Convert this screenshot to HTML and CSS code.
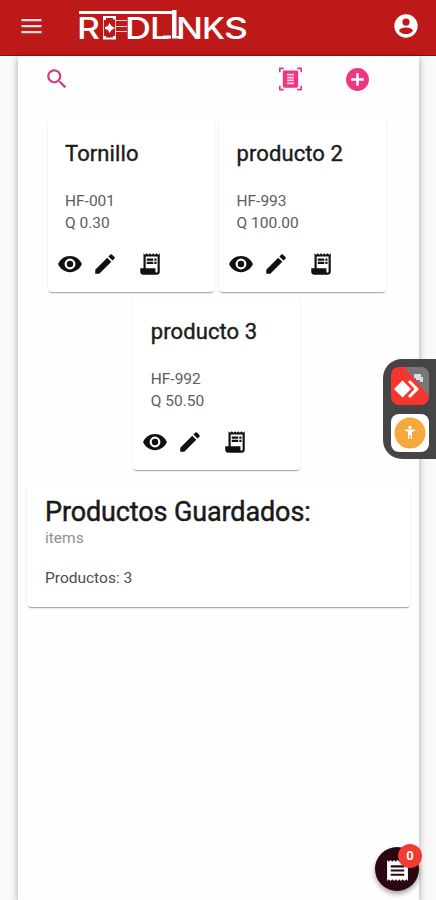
FILE: index.html
```
<!DOCTYPE html>
<html lang="es">
<head>
<meta charset="utf-8">
<title>Redlinks</title>
<link rel="stylesheet" href="styles.css">
</head>
<body>
<svg width="0" height="0" class="defs">
  <symbol id="eye" viewBox="0 0 24 24"><path d="M12 4.5C7 4.500 2.730 7.610 1 12c1.730 4.390 6 7.500 11 7.500s9.270-3.110 11-7.500c-1.730-4.390-6-7.500-11-7.500zM12 17a5 5 0 1 1 0-10 5 5 0 0 1 0 10zm0-8a3 3 0 1 0 0 6 3 3 0 0 0 0-6z"/></symbol>
  <symbol id="pen" viewBox="0 0 24 24"><path d="M3 17.250V21h3.750L17.810 9.940l-3.750-3.750L3 17.250zM20.710 7.040a1 1 0 0 0 0-1.410l-2.340-2.340a1 1 0 0 0-1.410 0l-1.830 1.830 3.750 3.750 1.830-1.830z"/></symbol>
  <symbol id="bill" viewBox="0 0 24 24"><path d="M19.500 3.500 18 2l-1.500 1.500L15 2l-1.500 1.500L12 2l-1.500 1.500L9 2 7.500 3.500 6 2v14H3v3a3 3 0 0 0 3 3h12a3 3 0 0 0 3-3V2l-1.500 1.500zM19 19a1 1 0 0 1-2 0v-3H8V5h11v14z"/><path d="M9 7h6v2H9zM16 7h2v2h-2zM9 10h6v2H9zM16 10h2v2h-2z"/></symbol>
</svg>
<header class="bar">
  <svg class="menu" viewBox="0 0 24 24"><path d="M2 5h20v2.300H2zM2 11h20v2.300H2zM2 17h20v2.300H2z"/></svg>
  <svg class="logo" viewBox="0 0 172 44">
    <g class="letters">
      <text x="-1" y="34.500" textLength="23" lengthAdjust="spacingAndGlyphs">R</text>
      <text x="47" y="34.500" textLength="26" lengthAdjust="spacingAndGlyphs">D</text>
      <text x="72" y="34.500" textLength="20" lengthAdjust="spacingAndGlyphs">L</text>
      <text x="98" y="34.500" textLength="27" lengthAdjust="spacingAndGlyphs">N</text>
      <text x="124" y="34.500" textLength="23" lengthAdjust="spacingAndGlyphs">K</text>
      <text x="146" y="34.500" textLength="24" lengthAdjust="spacingAndGlyphs">S</text>
    </g>
    <path class="white" d="M1 7h93V6h4.500v26h5v2.500H94V10H1zM85 31.500h8v3h-8z"/>
    <path class="thin" d="M25.500 13v22M37.500 15v18M38 16.500h11M38 22.500h11M38 27.500h11"/>
    <path class="white" d="M25 12h13v3.500h-3V14H28v2h-3zM25 35.500h13V32h-3v1.500H28v-1.500h-3zM27 23l3-1 1.500-3 2 3 3.500 2-3.500 2-2 3-1.500-3-3-1z"/>
  </svg>
  <svg class="user" viewBox="0 0 24 24"><path d="M12 2a10 10 0 1 0 0 20 10 10 0 0 0 0-20zm0 3.500a3.100 3.100 0 1 1 0 6.200 3.100 3.100 0 0 1 0-6.200zm0 13.400c-2.600 0-4.700-1-5.900-2.700.1-1.900 3.900-2.900 5.900-2.900s5.800 1 5.900 2.900c-1.200 1.700-3.300 2.700-5.900 2.700z"/></svg>
</header>
<main class="panel">
  <nav class="tools">
    <svg class="search" viewBox="0 0 24 24"><path d="M15.500 14h-.8l-.3-.3A6.500 6.500 0 1 0 13.700 14.400l.3.300v.8l5 5 1.500-1.500-5-5zm-6 0a4.500 4.500 0 1 1 0-9 4.500 4.500 0 0 1 0 9z"/></svg>
    <svg class="scan" viewBox="0 0 24 26"><path d="M0 6V1h5v1.700H1.700V6zM19 1h5v5h-1.700V2.700H19zM0 20v5h5v-1.700H1.700V20zM22.300 20v3.300H19V25h5v-5z"/><rect x="4" y="4" width="16" height="18" rx="1.500"/><path class="lines" d="M8.500 8.500h7M8.500 11.500h7M8.500 14.500h7M8.500 17.500h7"/></svg>
    <svg class="add" viewBox="0 0 24 24"><path d="M12 1a11 11 0 1 0 0 22 11 11 0 0 0 0-22zm6 12.200h-4.800V18h-2.400v-4.800H6v-2.400h4.800V6h2.400v4.800H18z"/></svg>
  </nav>
  <section class="products">
    <article class="card">
      <h2>Tornillo</h2>
      <p>HF-001<br>Q 0.30</p>
      <div class="actions"><svg><use href="#eye"/></svg><svg><use href="#pen"/></svg><svg><use href="#bill"/></svg></div>
    </article>
    <article class="card">
      <h2>producto 2</h2>
      <p>HF-993<br>Q 100.00</p>
      <div class="actions"><svg><use href="#eye"/></svg><svg><use href="#pen"/></svg><svg><use href="#bill"/></svg></div>
    </article>
    <article class="card">
      <h2>producto 3</h2>
      <p>HF-992<br>Q 50.50</p>
      <div class="actions"><svg><use href="#eye"/></svg><svg><use href="#pen"/></svg><svg><use href="#bill"/></svg></div>
    </article>
  </section>
  <section class="summary">
    <h1>Productos Guardados:</h1>
    <p class="sub">items</p>
    <p class="count">Productos: 3</p>
  </section>
</main>
<aside class="dock">
  <svg viewBox="0 0 38 38">
    <defs><clipPath id="tile"><rect width="38" height="38" rx="8"/></clipPath></defs>
    <g clip-path="url(#tile)"><rect width="38" height="38" fill="#f5352f"/><path d="M13 0h25v29z" fill="#777"/></g>
    <path d="M3 22l8.500-8.500L20 22l-8.500 8.500z" fill="#fff"/><path d="M17 15l2-2 9 9-9 9-2-2 6.500-7z" fill="#fff"/>
    <path d="M23 7h7v3h2v5h-3v-2h-4v-2h-2z" fill="#ddd"/>
  </svg>
  <svg viewBox="0 0 38 38"><rect width="38" height="38" rx="8" fill="#fff"/><circle cx="19" cy="19" r="15.500" fill="#f5a93c"/><circle cx="19" cy="13.500" r="1.700" fill="#fff"/><path d="M14 15.500h10v1.600l-3 .5V25h-1.300v-4h-1.400v4H17v-7.400l-3-.5z" fill="#fff"/></svg>
</aside>
<div class="fab">
  <svg viewBox="0 0 24 24"><path d="M2 2l1.700 1.500L5.300 2 7 3.500 8.700 2l1.600 1.500L12 2l1.700 1.500L15.300 2 17 3.500 18.700 2l1.600 1.500L22 2v20l-1.700-1.500-1.600 1.500-1.700-1.500-1.700 1.500-1.600-1.500L12 22l-1.700-1.500L8.700 22 7 20.500 5.300 22l-1.600-1.500L2 22zM5.500 7v2h13V7zM5.500 11v2h13v-2zM5.500 15v2h13v-2z" fill-rule="evenodd"/></svg>
  <span class="badge">0</span>
</div>
</body>
</html>
```
FILE: styles.css
```
* { box-sizing: border-box; }
body { margin: 0; height: 900px; overflow: hidden; background: #f9f9f9; font-family: Roboto, sans-serif; color: #1c1c1c; display: flex; flex-direction: column; }
svg { display: block; flex: none; }
.defs { position: absolute; }
h1, h2, p { margin: 0; }
.bar { flex: none; height: 56px; background: #bd1919; border-bottom: 1px solid #950b0b; display: flex; align-items: center; padding: 0 16px 3px 19px; fill: #fff; }
.menu { width: 25px; height: 24px; fill: #f3dede; }
.logo { width: 172px; height: 44px; margin-left: 34px; overflow: visible; }
.letters { font: 500 30px Inter, sans-serif; fill: #fff; }
.white { fill: #fff; }
.thin { fill: none; stroke: #f3cccc; stroke-width: 1; }
.user { width: 28px; height: 28px; margin-left: auto; }
.panel { flex: 1; margin: 0 17px 0 18px; padding: 0 9px; background: #fefefe; box-shadow: 0 2px 7px rgba(0,0,0,.35); }
.tools { height: 63px; display: flex; align-items: flex-start; padding: 10px 0 0 17px; fill: #ee3580; }
.search { width: 26px; height: 26px; fill: #d43b80; }
.scan { width: 23px; height: 26px; margin-left: 209px; }
.lines { stroke: #fbd3e3; stroke-width: 1.700; }
.add { width: 25px; height: 25px; margin-left: 43px; margin-top: 1px; }
.products { display: flex; flex-wrap: wrap; justify-content: center; gap: 5px; padding: 0 17px; margin: 0 -1px 0 -5px; }
.card { width: 166.500px; height: 173px; padding: 22px 9px 0; background: #fff; border-radius: 4px; box-shadow: 0 2px 1px -1px rgba(0,0,0,.28), 0 1px 2px rgba(0,0,0,.14); }
.card h2 { padding-left: 8.500px; font-size: 22px; font-weight: 400; -webkit-text-stroke: .4px #1c1c1c; letter-spacing: .1px; line-height: 26px; white-space: nowrap; }
.card p { padding: 23px 0 0 8.500px; font-size: 15.500px; line-height: 22px; color: #5c5c5c; }
.actions { display: flex; align-items: center; margin-top: 17px; fill: #111; }
.actions svg { width: 26px; height: 26px; }
.actions svg:nth-child(2) { margin-left: 9px; }
.actions svg:nth-child(3) { margin-left: 19px; }
.summary { height: 124px; margin-top: 13px; padding: 13px 18px; background: #fff; border-radius: 4px; box-shadow: 0 2px 1px -1px rgba(0,0,0,.28), 0 1px 2px rgba(0,0,0,.14); }
.summary h1 { font-size: 27px; font-weight: 400; -webkit-text-stroke: .45px #111; line-height: 32px; letter-spacing: -.12px; white-space: nowrap; }
.sub { font-size: 15.500px; line-height: 20px; color: #909090; }
.count { margin-top: 20px; font-size: 15.500px; line-height: 20px; color: #4c4c4c; }
.dock { position: absolute; right: 0; top: 359px; width: 53px; height: 100px; padding: 8px 0 0 8px; background: #454545; border-radius: 19px 0 0 19px; display: flex; flex-direction: column; gap: 9px; }
.dock svg { width: 38px; height: 38px; }
.fab { position: absolute; left: 375px; top: 847px; width: 44px; height: 44px; border-radius: 50%; background: #2b0710; box-shadow: 0 3px 5px rgba(0,0,0,.35); display: flex; align-items: center; justify-content: center; fill: #fff; }
.fab svg { width: 25px; height: 25px; margin-top: 2px; }
.badge { position: absolute; left: 23px; top: -3px; width: 24px; height: 24px; border-radius: 50%; background: #ef3b30; color: #fff; font-size: 13px; font-weight: 700; line-height: 24px; text-align: center; }
```
